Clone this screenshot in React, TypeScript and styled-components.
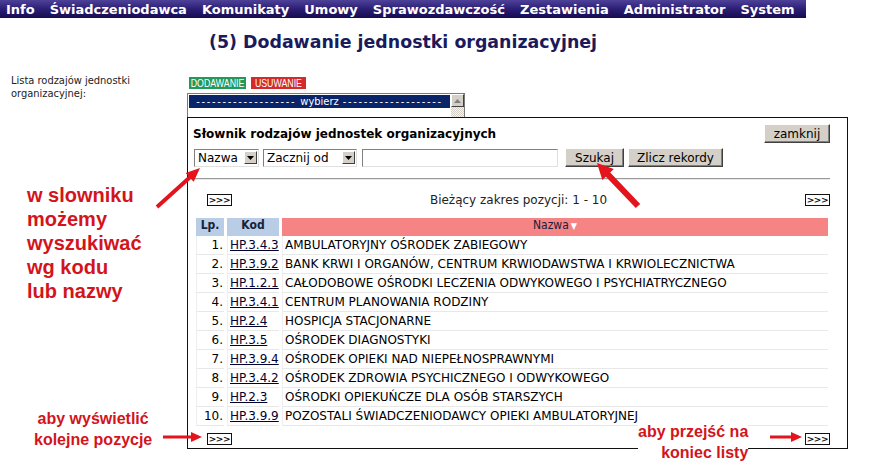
import React from "react";
import styled, { createGlobalStyle } from "styled-components";

const ui = `"DejaVu Sans Condensed", "DejaVu Sans", Tahoma, sans-serif`;
const wide = `"DejaVu Sans", Verdana, sans-serif`;
const note = `"Liberation Sans", Arial, sans-serif`;

const GlobalStyle = createGlobalStyle`
  html, body { margin: 0; padding: 0; background: #fff; }
  body { font-family: ${ui}; color: #000; }
`;

const Page = styled.div`
  position: relative;
  width: 869px;
  height: 464px;
  overflow: hidden;
`;

const MenuBar = styled.nav`
  display: flex;
  align-items: center;
  gap: 15px;
  width: 806px;
  height: 18px;
  padding-left: 6px;
  box-sizing: border-box;
  background: linear-gradient(#4d4199 0%, #2b1f74 50%, #160b50 100%);
`;

const MenuItem = styled.span`
  color: #fff;
  font: bold 13px ${wide};
  white-space: nowrap;
`;

const Title = styled.h1`
  margin: 14px 0 0 209px;
  font: bold 17.4px ${wide};
  line-height: 20px;
  color: #1a1a5c;
`;

const FormGrid = styled.div`
  display: grid;
  grid-template-columns: 176px 290px;
  padding-left: 11px;
  margin-top: 22px;
`;

const FieldLabel = styled.div`
  font-size: 11px;
  line-height: 13px;
  color: #222;
`;

const Controls = styled.div`
  display: flex;
  flex-direction: column;
  padding-top: 3px;
`;

const BadgeRow = styled.div`
  display: flex;
  gap: 5px;
  padding-left: 2px;
`;

const Badge = styled.span<{ $tone: "add" | "remove"; $w: number }>`
  display: inline-flex;
  justify-content: center;
  width: ${(p) => p.$w}px;
  height: 12px;
  line-height: 12px;
  background: ${(p) => (p.$tone === "add" ? "#22995a" : "#d32a2a")};
  color: #fff;
  font: 11px ${note};
  overflow: hidden;
`;

const BadgeText = styled.span`
  display: inline-block;
  transform: scaleX(0.8);
  white-space: nowrap;
`;

const ListBox = styled.div`
  display: flex;
  margin-top: 4px;
  width: 278px;
  height: 30px;
  border: 1px solid #7a7a7a;
  box-sizing: border-box;
`;

const ListOptions = styled.div`
  flex: 1;
  min-width: 0;
  padding: 1px;
`;

const SelectedOption = styled.div`
  display: flex;
  justify-content: center;
  gap: 4px;
  height: 13px;
  line-height: 13px;
  background: #0a246a;
  color: #fff;
  font-size: 11px;
  white-space: nowrap;
`;

const Dashes = styled.span`
  letter-spacing: 1.7px;
`;

const ScrollTrack = styled.div`
  width: 13px;
  background: repeating-conic-gradient(#d4d0c8 0 25%, #f4f4f4 0 50%) 0 0 / 2px 2px;
`;

const ScrollUp = styled.div`
  height: 13px;
  box-sizing: border-box;
  background: #d4d0c8;
  border: 1px solid;
  border-color: #fff #404040 #404040 #fff;
  display: flex;
  align-items: center;
  justify-content: center;
`;

const Popup = styled.section`
  position: absolute;
  left: 187px;
  top: 117px;
  width: 661px;
  height: 332px;
  box-sizing: border-box;
  border: 1px solid #111;
  background: #fff;
  padding: 6px 17px 0 5px;
  display: flex;
  flex-direction: column;
  font: 12px ${wide};
`;

const PopupHeader = styled.div`
  display: flex;
  align-items: center;
  justify-content: space-between;
  height: 19px;
`;

const PopupTitle = styled.div`
  font-weight: bold;
  font-size: 12px;
`;

const SearchRow = styled.div`
  display: flex;
  align-items: center;
  gap: 4px;
  margin-top: 5px;
  height: 19px;
  padding-left: 1px;
`;

const SelectBox = styled.div<{ $w: number }>`
  display: flex;
  align-items: center;
  justify-content: space-between;
  width: ${(p) => p.$w}px;
  height: 18px;
  box-sizing: border-box;
  border: 1px solid;
  border-color: #808080 #e0e0e0 #e0e0e0 #808080;
  padding: 0 1px 0 3px;
  font-size: 12px;
  background: #fff;
  white-space: nowrap;
`;

const DropBtn = styled.span`
  width: 13px;
  height: 13px;
  flex: none;
  box-sizing: border-box;
  background: #d4d0c8;
  border: 1px solid;
  border-color: #fff #404040 #404040 #fff;
  display: flex;
  align-items: center;
  justify-content: center;
`;

const TextInput = styled.div`
  width: 196px;
  height: 18px;
  box-sizing: border-box;
  border: 1px solid;
  border-color: #808080 #e0e0e0 #e0e0e0 #808080;
  margin-left: 1px;
  margin-right: 3px;
`;

const Button = styled.button<{ $w: number }>`
  width: ${(p) => p.$w}px;
  height: 19px;
  padding: 0;
  background: #d4d0c8;
  border: 1px solid;
  border-color: #fff #404040 #404040 #fff;
  box-shadow: inset -1px -1px #808080;
  font: 12px ${wide};
  color: #000;
  white-space: nowrap;
`;

const Rule = styled.hr`
  margin: 11px 0 0 0;
  border: 0;
  border-top: 1px solid #9a9a9a;
  border-bottom: 1px solid #e8e8e8;
  height: 0;
`;

const Pager = styled.div<{ $top: number }>`
  display: flex;
  align-items: center;
  justify-content: space-between;
  margin-top: ${(p) => p.$top}px;
  padding-left: 14px;
  height: 12px;
`;

const PagerBtn = styled.span`
  display: inline-flex;
  align-items: center;
  justify-content: center;
  width: 25px;
  height: 12px;
  box-sizing: border-box;
  border: 1px solid #111;
  font: bold 9px ${wide};
  letter-spacing: -0.3px;
  line-height: 10px;
  color: #111;
`;

const RangeText = styled.span`
  font-size: 12px;
  color: #222;
`;

const Table = styled.div`
  display: grid;
  grid-template-columns: 28px 52px 546px;
  column-gap: 3px;
  margin: 12px 0 0 3px;
`;

const HeadCell = styled.div<{ $tone: "blue" | "pink" }>`
  height: 18px;
  line-height: 18px;
  text-align: center;
  font: ${(p) => (p.$tone === "blue" ? "bold" : "normal")} 12px ${ui};
  background: ${(p) => (p.$tone === "blue" ? "#b9cde6" : "#f68484")};
  color: #15223d;
`;

const SortMark = styled.span`
  color: #fff;
  font-size: 9px;
  margin-left: 2px;
`;

const Cell = styled.div<{ $align?: "right" | "left" }>`
  height: 19px;
  line-height: 18px;
  box-sizing: border-box;
  border-bottom: 1px solid #e8e8e8;
  border-left: 1px solid #efefef;
  padding: 0 1px 0 2px;
  font-size: 12px;
  text-align: ${(p) => p.$align ?? "left"};
  white-space: nowrap;
`;

const CodeLink = styled.a`
  color: #000033;
  text-decoration: underline;
`;

const Overlay = styled.svg`
  position: absolute;
  left: 0;
  top: 0;
  pointer-events: none;
`;

const Note = styled.div<{ $x: number; $y: number; $size: number; $lh: number; $align?: string }>`
  position: absolute;
  left: ${(p) => p.$x}px;
  top: ${(p) => p.$y}px;
  font: bold ${(p) => p.$size}px ${note};
  line-height: ${(p) => p.$lh}px;
  color: #d3141b;
  text-align: ${(p) => p.$align ?? "left"};
  background: #fff;
  white-space: pre;
`;

const rows = [
  ["HP.3.4.3", "AMBULATORYJNY OŚRODEK ZABIEGOWY"],
  ["HP.3.9.2", "BANK KRWI I ORGANÓW, CENTRUM KRWIODAWSTWA I KRWIOLECZNICTWA"],
  ["HP.1.2.1", "CAŁODOBOWE OŚRODKI LECZENIA ODWYKOWEGO I PSYCHIATRYCZNEGO"],
  ["HP.3.4.1", "CENTRUM PLANOWANIA RODZINY"],
  ["HP.2.4", "HOSPICJA STACJONARNE"],
  ["HP.3.5", "OŚRODEK DIAGNOSTYKI"],
  ["HP.3.9.4", "OŚRODEK OPIEKI NAD NIEPEŁNOSPRAWNYMI"],
  ["HP.3.4.2", "OŚRODEK ZDROWIA PSYCHICZNEGO I ODWYKOWEGO"],
  ["HP.2.3", "OŚRODKI OPIEKUŃCZE DLA OSÓB STARSZYCH"],
  ["HP.3.9.9", "POZOSTALI ŚWIADCZENIODAWCY OPIEKI AMBULATORYJNEJ"],
];

const menu = [
  "Info",
  "Świadczeniodawca",
  "Komunikaty",
  "Umowy",
  "Sprawozdawczość",
  "Zestawienia",
  "Administrator",
  "System",
];

const dashes = "-".repeat(19);

// thick arrow: shaft + triangular head, tip at (x2, y2)
function arrowPoints(x1: number, y1: number, x2: number, y2: number, t: number, hl: number, hw: number) {
  const dx = x2 - x1;
  const dy = y2 - y1;
  const len = Math.hypot(dx, dy);
  const ux = dx / len;
  const uy = dy / len;
  const nx = -uy;
  const ny = ux;
  const bx = x2 - ux * hl;
  const by = y2 - uy * hl;
  const pts = [
    [x1 + (nx * t) / 2, y1 + (ny * t) / 2],
    [bx + (nx * t) / 2, by + (ny * t) / 2],
    [bx + (nx * hw) / 2, by + (ny * hw) / 2],
    [x2, y2],
    [bx - (nx * hw) / 2, by - (ny * hw) / 2],
    [bx - (nx * t) / 2, by - (ny * t) / 2],
    [x1 - (nx * t) / 2, y1 - (ny * t) / 2],
  ];
  return pts.map((p) => p.map((v) => v.toFixed(1)).join(",")).join(" ");
}

const Caret = ({ up }: { up?: boolean }) => (
  <svg width="7" height="4" viewBox="0 0 7 4">
    <polygon points={up ? "0,4 7,4 3.5,0" : "0,0 7,0 3.5,4"} fill={up ? "#808080" : "#000"} />
  </svg>
);

export default function App() {
  return (
    <Page>
      <GlobalStyle />
      <MenuBar>
        {menu.map((m) => (
          <MenuItem key={m}>{m}</MenuItem>
        ))}
      </MenuBar>
      <Title>(5) Dodawanie jednostki organizacyjnej</Title>
      <FormGrid>
        <FieldLabel>
          Lista rodzajów jednostki
          <br />
          organizacyjnej:
        </FieldLabel>
        <Controls>
          <BadgeRow>
            <Badge $tone="add" $w={57}>
              <BadgeText>DODAWANIE</BadgeText>
            </Badge>
            <Badge $tone="remove" $w={55}>
              <BadgeText>USUWANIE</BadgeText>
            </Badge>
          </BadgeRow>
          <ListBox>
            <ListOptions>
              <SelectedOption>
                <Dashes>{dashes}</Dashes>
                <span>wybierz</span>
                <Dashes>{dashes}</Dashes>
              </SelectedOption>
            </ListOptions>
            <ScrollTrack>
              <ScrollUp>
                <Caret up />
              </ScrollUp>
            </ScrollTrack>
          </ListBox>
        </Controls>
      </FormGrid>

      <Popup>
        <PopupHeader>
          <PopupTitle>Słownik rodzajów jednostek organizacyjnych</PopupTitle>
          <Button $w={66}>zamknij</Button>
        </PopupHeader>
        <SearchRow>
          <SelectBox $w={65}>
            Nazwa
            <DropBtn>
              <Caret />
            </DropBtn>
          </SelectBox>
          <SelectBox $w={94}>
            Zacznij od
            <DropBtn>
              <Caret />
            </DropBtn>
          </SelectBox>
          <TextInput />
          <Button $w={59}>Szukaj</Button>
          <Button $w={95}>Zlicz rekordy</Button>
        </SearchRow>
        <Rule />
        <Pager $top={14}>
          <PagerBtn>&gt;&gt;&gt;</PagerBtn>
          <RangeText>Bieżący zakres pozycji: 1 - 10</RangeText>
          <PagerBtn>&gt;&gt;&gt;</PagerBtn>
        </Pager>
        <Table>
          <HeadCell $tone="blue">Lp.</HeadCell>
          <HeadCell $tone="blue">Kod</HeadCell>
          <HeadCell $tone="pink">
            Nazwa<SortMark>▼</SortMark>
          </HeadCell>
          {rows.map(([code, name], i) => (
            <React.Fragment key={code}>
              <Cell $align="right">{i + 1}.</Cell>
              <Cell>
                <CodeLink>{code}</CodeLink>
              </Cell>
              <Cell>{name}</Cell>
            </React.Fragment>
          ))}
        </Table>
        <Pager $top={7}>
          <PagerBtn>&gt;&gt;&gt;</PagerBtn>
          <PagerBtn>&gt;&gt;&gt;</PagerBtn>
        </Pager>
      </Popup>

      <Note $x={27} $y={183} $size={20} $lh={24}>
        {"w slowniku\nmożemy\nwyszukiwać\nwg kodu\nlub nazwy"}
      </Note>
      <Note $x={34} $y={408} $size={16} $lh={21} $align="center">
        {"aby wyświetlić\nkolejne pozycje"}
      </Note>
      <Note $x={638} $y={421} $size={16} $lh={21} $align="right">
        {"aby przejść na\nkoniec listy"}
      </Note>

      <Overlay width="869" height="464" viewBox="0 0 869 464">
        <g fill="#e3141b">
          <polygon points={arrowPoints(157, 207, 200, 168, 4, 14, 12)} />
          <polygon points={arrowPoints(638, 206, 597, 163, 6, 16, 16)} />
          <polygon points={arrowPoints(163, 437, 202, 437, 3, 11, 10)} />
          <polygon points={arrowPoints(770, 437, 802, 437, 3, 11, 10)} />
        </g>
      </Overlay>
    </Page>
  );
}
